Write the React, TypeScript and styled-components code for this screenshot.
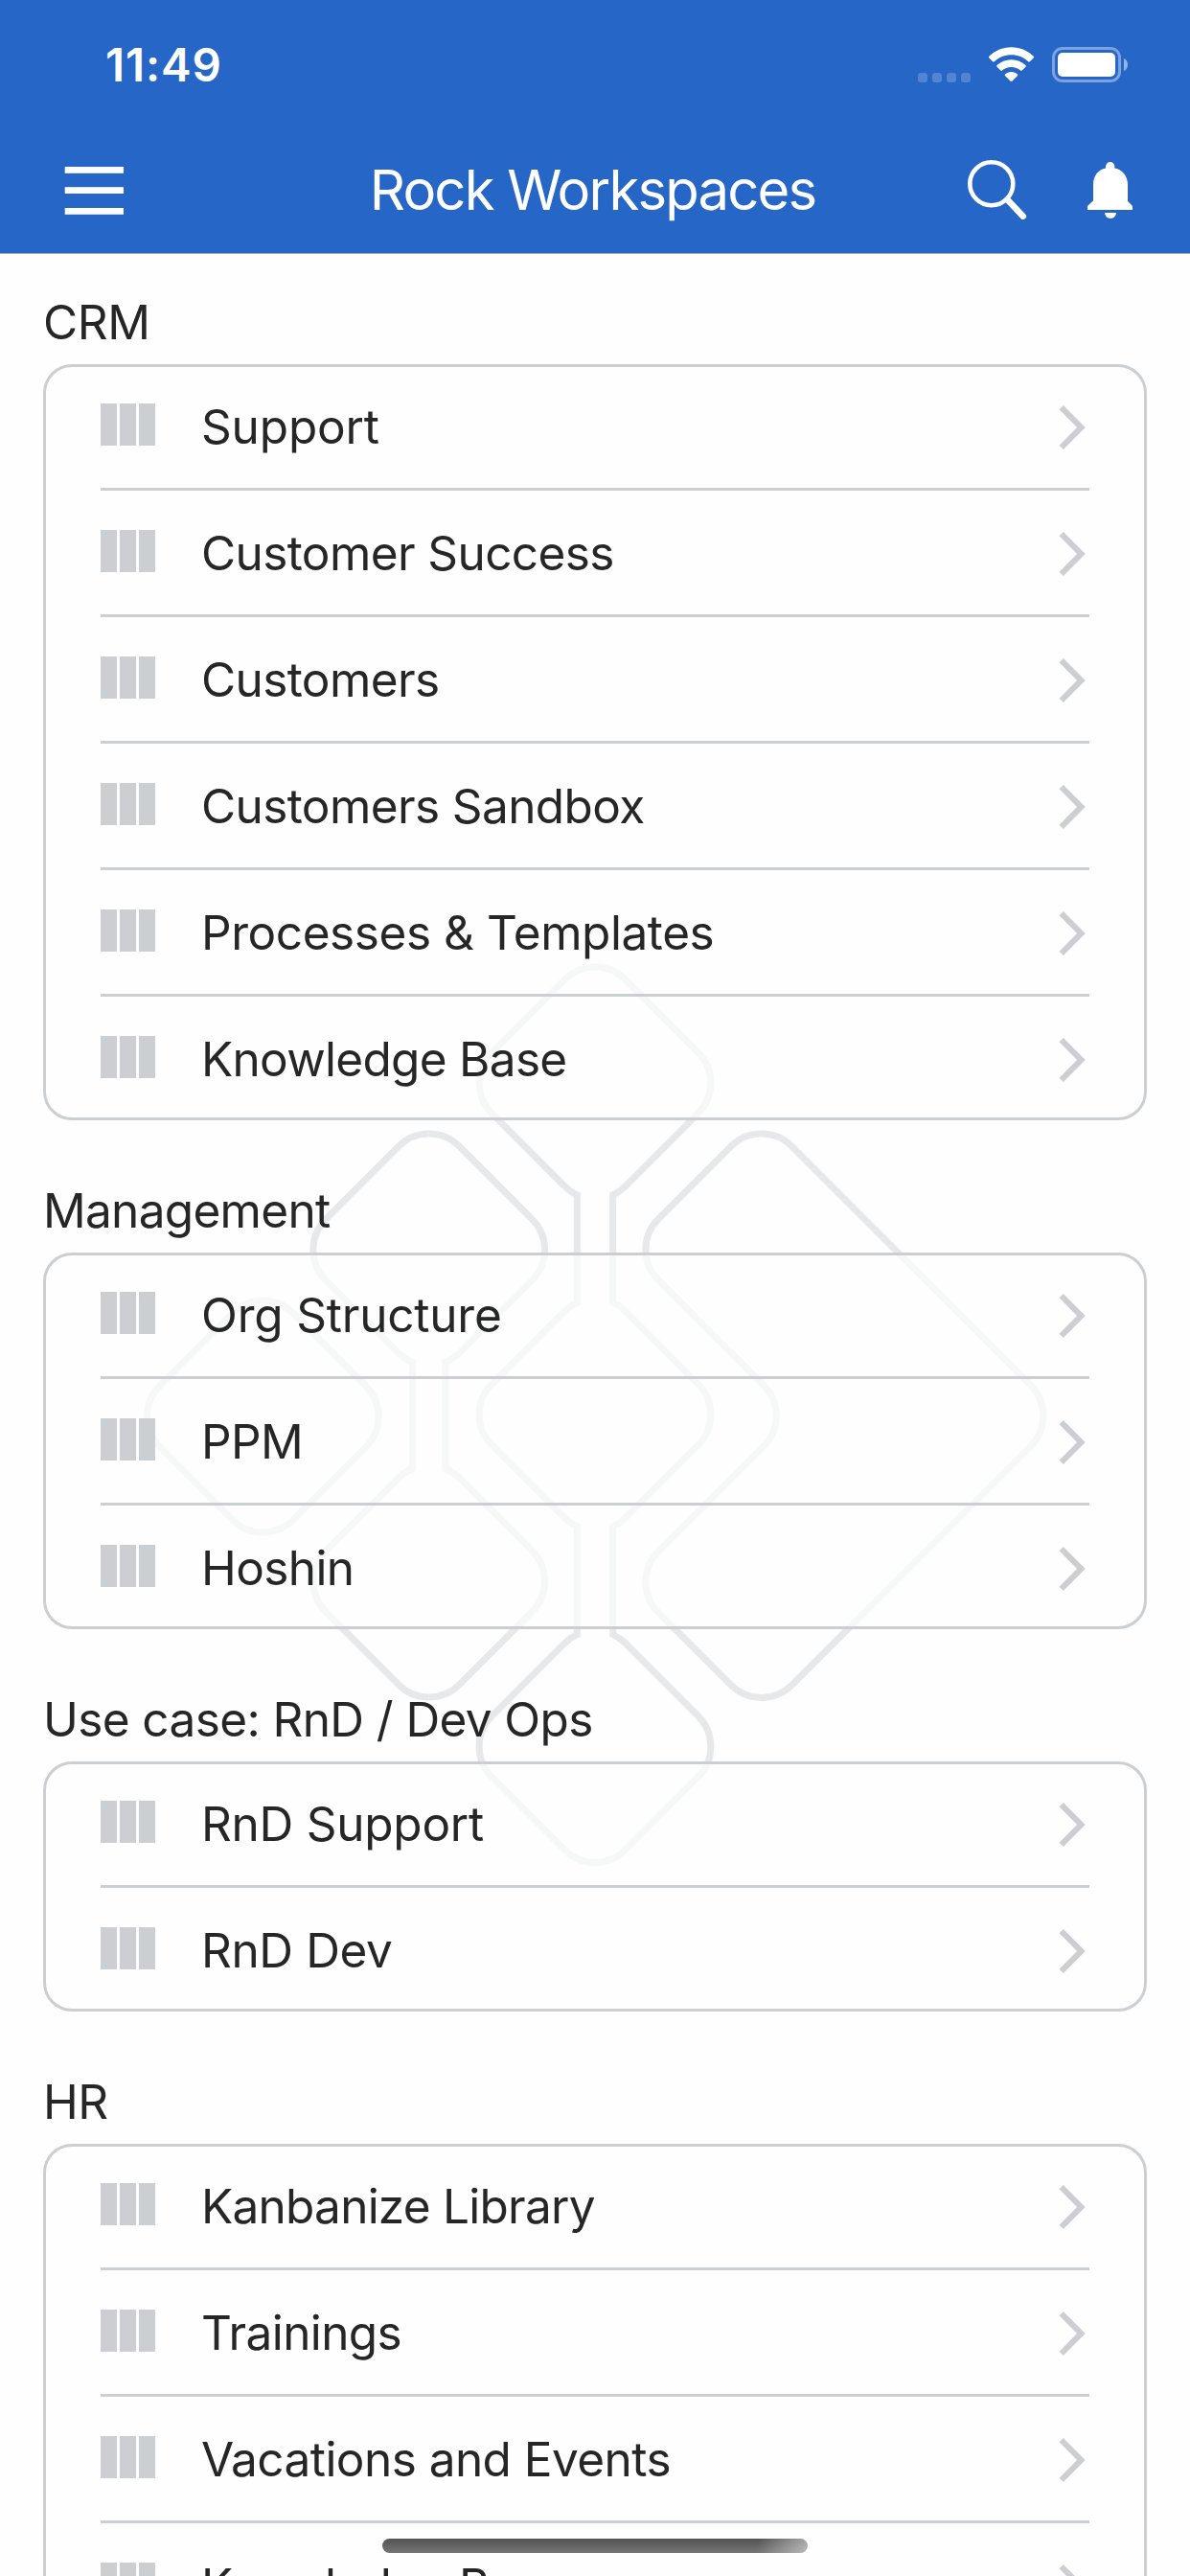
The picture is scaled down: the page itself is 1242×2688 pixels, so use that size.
import React from 'react';
import styled, { createGlobalStyle } from 'styled-components';

const color = {
  brand: '#2666c6',
  line: '#cbcfd2',
  text: '#262626',
  page: '#fefefe',
  watermark: '#e6e8ea',
};

const GlobalStyle = createGlobalStyle`
  *, *::before, *::after { box-sizing: border-box; }
  body { margin: 0; background: ${color.page}; }
`;

const Screen = styled.div`
  position: relative;
  display: flex;
  flex-direction: column;
  width: 1242px;
  height: 2688px;
  overflow: hidden;
  background: ${color.page};
  color: ${color.text};
  font-family: Inter, "Noto Sans", sans-serif;
  font-size: 49.5px;
`;

const Header = styled.header`
  flex: none;
  display: flex;
  flex-direction: column;
  height: 265px;
  background: ${color.brand};
  border-bottom: 1px solid #a3a8b0;
  color: #fff;
`;

const StatusBar = styled.div`
  display: flex;
  align-items: center;
  justify-content: space-between;
  height: 135px;
  padding: 0 65px 0 110px;
`;

const Clock = styled.time`
  font-size: 47.5px;
  font-weight: 600;
  letter-spacing: 0.9px;
  line-height: 58px;
`;

const StatusIcons = styled.div`
  display: flex;
  align-items: center;
`;

const SignalDots = styled.div`
  display: flex;
  gap: 5px;
  margin: 26px 19px 0 0;
`;

const Dot = styled.span`
  width: 10px;
  height: 10px;
  border-radius: 3px;
  background: rgba(255, 255, 255, 0.2);
`;

const WifiIcon = styled.svg`
  width: 47px;
  height: 37px;
  margin-right: 19px;
`;

const BatteryIcon = styled.svg`
  width: 79px;
  height: 37px;
`;

const NavBar = styled.div`
  display: grid;
  grid-template-columns: 1fr auto 1fr;
  align-items: center;
  height: 129px;
  padding: 0 60px 0 67px;
`;

const MenuIcon = styled.svg`
  width: 62px;
  height: 52px;
  margin-top: -1px;
`;

const Title = styled.h1`
  margin: 0 6px 3px -6px;
  font-size: 58px;
  font-weight: 400;
  letter-spacing: -1.83px;
  line-height: 70px;
`;

const Actions = styled.div`
  display: flex;
  justify-content: flex-end;
  gap: 63px;
`;

const ActionIcon = styled.svg<{ $width: number }>`
  width: ${(p) => p.$width}px;
  height: 64px;
  margin-top: -6px;
`;

const Watermark = styled.svg`
  position: absolute;
  left: 150px;
  top: 1000px;
  width: 945px;
  height: 952px;
`;

const Content = styled.main`
  position: relative;
  flex: 1;
  min-height: 0;
  display: flex;
  flex-direction: column;
  gap: 64px;
  padding: 41px 45px 0;
`;

const Section = styled.section`
  flex: none;
  display: flex;
  flex-direction: column;
  gap: 14px;
`;

const SectionTitle = styled.h2<{ $tracking: number }>`
  margin: 0;
  font-size: inherit;
  font-weight: 400;
  line-height: 60px;
  letter-spacing: ${(p) => p.$tracking}px;
`;

const Card = styled.div`
  border: 3px solid ${color.line};
  border-radius: 30px;
  background: rgba(254, 254, 254, 0.68);
  background-clip: padding-box;
`;

const List = styled.ul`
  display: flex;
  flex-direction: column;
  margin: -3px 57px -6px;
  padding: 0;
  list-style: none;
`;

const Row = styled.li`
  display: flex;
  align-items: center;
  height: 132px;
  border-bottom: 3px solid ${color.line};

  &:last-child {
    border-bottom-color: transparent;
  }
`;

const BoardIcon = styled.span`
  flex: none;
  display: grid;
  grid-template-columns: repeat(3, 17px);
  gap: 3px;
  width: 58px;
  height: 44px;
  margin: 0 47px 3px 0;
`;

const Bar = styled.i`
  background: ${color.line};
`;

const Label = styled.span<{ $tracking: number }>`
  flex: 1;
  margin-top: 1px;
  line-height: 60px;
  letter-spacing: ${(p) => p.$tracking}px;
  white-space: nowrap;
`;

const Chevron = styled.svg`
  flex: none;
  width: 28px;
  height: 48px;
  margin: 3px 4px 0 0;
`;

const HomeIndicator = styled.div`
  position: absolute;
  left: 399px;
  top: 2649px;
  width: 444px;
  height: 15px;
  border-radius: 8px;
  background:
    linear-gradient(100deg, transparent 88%, rgba(255, 255, 255, 0.5) 100%),
    linear-gradient(#545454, #757575);
`;

type Entry = { name: string; tracking?: number };
type Group = Entry & { items: Entry[] };

const groups: Group[] = [
  {
    name: 'CRM',
    tracking: -0.4,
    items: [
      { name: 'Support', tracking: -0.15 },
      { name: 'Customer Success' },
      { name: 'Customers' },
      { name: 'Customers Sandbox' },
      { name: 'Processes & Templates', tracking: -0.43 },
      { name: 'Knowledge Base', tracking: -0.7 },
    ],
  },
  {
    name: 'Management',
    tracking: -0.7,
    items: [{ name: 'Org Structure', tracking: -0.2 }, { name: 'PPM' }, { name: 'Hoshin' }],
  },
  {
    name: 'Use case: RnD / Dev Ops',
    tracking: -0.6,
    items: [
      { name: 'RnD Support', tracking: -0.25 },
      { name: 'RnD Dev', tracking: -0.4 },
    ],
  },
  {
    name: 'HR',
    items: [
      { name: 'Kanbanize Library', tracking: -0.75 },
      { name: 'Trainings' },
      { name: 'Vacations and Events', tracking: -0.55 },
      { name: 'Knowledge Base', tracking: -0.7 },
    ],
  },
];

const R = 45;
const TIP = 121;
const NEAR = 31.8;
const FAR = 107.7;

/* Right-hand outline of a column of rounded diamonds joined by vertical necks. */
function columnOutline(centers: number[], neck = 18.7) {
  const dy = 75.9 + Math.sqrt(R * R - neck * neck);
  return centers
    .map((c, i) => {
      const last = i === centers.length - 1;
      const start = i === 0 ? `M0 ${c - TIP}` : `V${c - dy}`;
      const end = last ? `0 ${c + TIP}` : `${neck} ${c + dy}`;
      return (
        `${start}A${R} ${R} 0 0 1 ${NEAR} ${c - FAR}L${FAR} ${c - NEAR}` +
        `A${R} ${R} 0 0 1 ${FAR} ${c + NEAR}L${NEAR} ${c + FAR}A${R} ${R} 0 0 1 ${end}`
      );
    })
    .join('');
}

/* Closed polygon whose corners are replaced with arcs of radius R. */
function roundedPolygon(points: [number, number][]) {
  const n = points.length;
  return (
    points
      .map(([x, y], i) => {
        const [px, py] = points[(i + n - 1) % n];
        const [nx, ny] = points[(i + 1) % n];
        const a = Math.hypot(px - x, py - y);
        const b = Math.hypot(nx - x, ny - y);
        const convex = (x - px) * (ny - y) - (y - py) * (nx - x) > 0 ? 1 : 0;
        const sx = x + ((px - x) / a) * R;
        const sy = y + ((py - y) / a) * R;
        const ex = x + ((nx - x) / b) * R;
        const ey = y + ((ny - y) / b) * R;
        return `${i ? 'L' : 'M'}${sx} ${sy}A${R} ${R} 0 0 ${convex} ${ex} ${ey}`;
      })
      .join('') + 'Z'
  );
}

function Column({ x, centers, neck }: { x: number; centers: number[]; neck?: number }) {
  const d = columnOutline(centers, neck);
  return (
    <g transform={`translate(${x} 0)`}>
      <path d={d} />
      <path d={d} transform="scale(-1 1)" />
    </g>
  );
}

function LogoWatermark() {
  return (
    <Watermark viewBox="150 1000 945 952" fill="none" stroke={color.watermark} strokeWidth="7">
      <Column x={621} centers={[1130, 1476, 1822.5]} />
      <Column x={447.7} centers={[1304, 1650]} neck={17.2} />
      <Column x={274.3} centers={[1478]} />
      <path
        d={roundedPolygon([
          [794.7, 1164.5],
          [1107.5, 1477.3],
          [794.7, 1790],
          [655.2, 1650.8],
          [829, 1477.3],
          [655.2, 1303.7],
        ])}
      />
    </Watermark>
  );
}

function EntryRow({ name, tracking = -0.6 }: Entry) {
  return (
    <Row>
      <BoardIcon>
        <Bar />
        <Bar />
        <Bar />
      </BoardIcon>
      <Label $tracking={tracking}>{name}</Label>
      <Chevron viewBox="0 0 28 48" fill="none" stroke={color.line} strokeWidth="6.1">
        <path d="M2.7 3.2L23.4 24L2.7 44.8" />
      </Chevron>
    </Row>
  );
}

export default function App() {
  return (
    <Screen>
      <GlobalStyle />
      <Header>
        <StatusBar>
          <Clock>11:49</Clock>
          <StatusIcons>
            <SignalDots>
              <Dot />
              <Dot />
              <Dot />
              <Dot />
            </SignalDots>
            <WifiIcon viewBox="0 0 47 37" fill="#fff">
              <path d="M23.5 0.3C32.5 0.3 40.8 3.9 46.7 9.8Q47.4 10.6 46.7 11.4L42.8 15.2Q42 15.9 41.2 15.2C36.5 10.7 30.3 8.2 23.5 8.2S10.5 10.7 5.8 15.2Q5 15.9 4.2 15.2L0.3 11.4Q-0.4 10.6 0.3 9.8C6.2 3.9 14.5 0.3 23.5 0.3Z" />
              <path d="M23.5 13.2C29.3 13.2 34.5 15.4 38.5 19.1Q39.3 19.9 38.5 20.7L34.6 24.5Q33.8 25.2 33 24.5C30.5 22.3 27.2 21 23.5 21S16.5 22.3 14 24.5Q13.2 25.2 12.4 24.5L8.5 20.7Q7.7 19.9 8.5 19.1C12.5 15.4 17.7 13.2 23.5 13.2Z" />
              <path d="M23.5 26C26 26 28.3 26.9 30 28.5Q30.7 29.2 30 29.9L24.3 35.7Q23.5 36.4 22.7 35.7L17 29.9Q16.3 29.2 17 28.5C18.7 26.9 21 26 23.5 26Z" />
            </WifiIcon>
            <BatteryIcon viewBox="0 0 79 37">
              <rect x="1.5" y="1.5" width="69" height="34" rx="9.5" fill="none" stroke="#fff" strokeOpacity="0.4" strokeWidth="3" />
              <rect x="6" y="6" width="60" height="25" rx="5" fill="#fff" />
              <path d="M75 12C77.5 13 79 15.5 79 18.5S77.5 24 75 25Z" fill="#fff" fillOpacity="0.5" />
            </BatteryIcon>
          </StatusIcons>
        </StatusBar>
        <NavBar>
          <MenuIcon viewBox="0 0 62 52" fill="#fff">
            <rect x="0.7" y="1" width="61.3" height="6.8" />
            <rect x="0.7" y="22.2" width="61.3" height="6.8" />
            <rect x="0.7" y="44" width="61.3" height="6.8" />
          </MenuIcon>
          <Title>Rock Workspaces</Title>
          <Actions>
            <ActionIcon $width={62} viewBox="0 0 62 64" fill="none" stroke="#fff">
              <circle cx="24.8" cy="26.8" r="22.5" strokeWidth="4.6" />
              <path d="M41.5 43.5L57.8 60.7" strokeWidth="6.6" strokeLinecap="round" />
            </ActionIcon>
            <ActionIcon $width={47} viewBox="0 0 47 64" fill="#fff">
              <path d="M19 10.6V8.8A4.7 4.7 0 0 1 28.4 8.8V10.6C36.5 12.2 42 19 42 27.5V45L46.3 49.3Q47 50 47 51V54H0V51Q0 50 0.7 49.3L6 44.5V27.5C6 19 11 12.2 19 10.6Z" />
              <path d="M18 57H30A6 6 0 0 1 18 57Z" />
            </ActionIcon>
          </Actions>
        </NavBar>
      </Header>
      <LogoWatermark />
      <Content>
        {groups.map((group) => (
          <Section key={group.name}>
            <SectionTitle $tracking={group.tracking ?? -0.6}>{group.name}</SectionTitle>
            <Card>
              <List>
                {group.items.map((item) => (
                  <EntryRow key={item.name} {...item} />
                ))}
              </List>
            </Card>
          </Section>
        ))}
      </Content>
      <HomeIndicator />
    </Screen>
  );
}
